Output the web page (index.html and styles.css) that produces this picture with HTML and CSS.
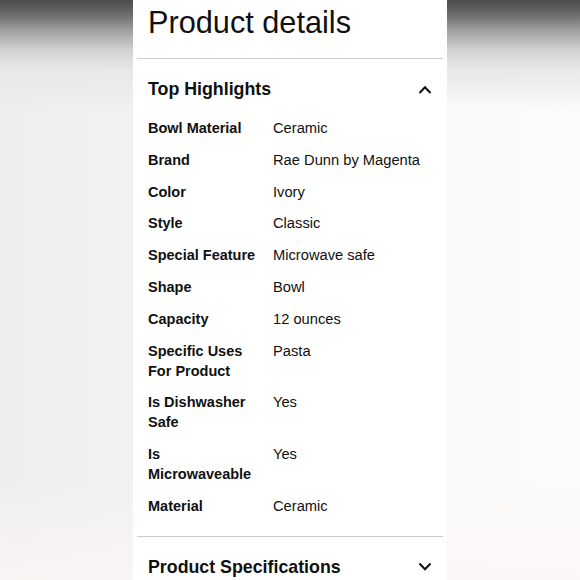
FILE: index.html
```html
<!DOCTYPE html>
<html lang="en">
<head>
<meta charset="utf-8">
<title>Product details</title>
<link rel="stylesheet" href="styles.css">
</head>
<body>
<div class="stage">
  <main class="panel">
    <h1 class="title">Product details</h1>
    <section class="section">
      <div class="section-head">
        <h2 class="section-title">Top Highlights</h2>
        <svg class="chevron" width="14" height="9" viewBox="0 0 14 9" aria-hidden="true"><polyline points="1.5,8 7,2.2 12.5,8" fill="none" stroke="#0f1111" stroke-width="2"/></svg>
      </div>
      <dl class="specs">
        <dt>Bowl Material</dt><dd>Ceramic</dd>
        <dt>Brand</dt><dd>Rae Dunn by Magenta</dd>
        <dt>Color</dt><dd>Ivory</dd>
        <dt>Style</dt><dd>Classic</dd>
        <dt>Special Feature</dt><dd>Microwave safe</dd>
        <dt>Shape</dt><dd>Bowl</dd>
        <dt>Capacity</dt><dd>12 ounces</dd>
        <dt>Specific Uses For Product</dt><dd>Pasta</dd>
        <dt>Is Dishwasher Safe</dt><dd>Yes</dd>
        <dt>Is Microwaveable</dt><dd>Yes</dd>
        <dt>Material</dt><dd>Ceramic</dd>
      </dl>
    </section>
    <section class="section">
      <div class="section-head">
        <h2 class="section-title">Product Specifications</h2>
        <svg class="chevron" width="14" height="9" viewBox="0 0 14 9" aria-hidden="true"><polyline points="1.5,1.5 7,7.2 12.5,1.5" fill="none" stroke="#0f1111" stroke-width="2"/></svg>
      </div>
    </section>
  </main>
</div>
</body>
</html>
```
FILE: styles.css
```css
html, body {
  margin: 0;
  padding: 0;
}
body {
  height: 580px;
  overflow: hidden;
  font-family: "Liberation Sans", Arial, sans-serif;
  color: #0f1111;
  background:
    linear-gradient(to bottom, #4b4b4b 0px, #6a6a6a 14px, #a4a4a4 32px, #d2d2d2 50px, #e8e8e8 70px, rgba(240,240,240,0) 110px),
    linear-gradient(to bottom, rgba(255,255,255,0) 0, rgba(255,255,255,0) 480px, rgba(252,246,244,0.8) 580px),
    linear-gradient(to right, #eeeeee 0, #f1f1f1 133px, #fafafa 447px, #fbfbfb 580px);
}
.stage {
  display: flex;
  justify-content: center;
  height: 580px;
}
.panel {
  width: 306px;
  padding: 0 4px;
  background: #ffffff;
  height: 580px;
}
.title {
  margin: 0;
  padding: 3px 0 15px 11px;
  font-size: 30.7px;
  line-height: 40px;
  font-weight: 400;
  border-bottom: 1px solid #cccccc;
}
.section {
  border-bottom: 1px solid #cccccc;
  padding: 18px 0 20px 11px;
}
.section-head {
  display: flex;
  align-items: center;
  justify-content: space-between;
  padding-right: 11px;
}
.section-title {
  margin: 0;
  font-size: 17.8px;
  line-height: 24px;
  font-weight: 700;
}
.chevron {
  display: block;
}
.specs {
  margin: 17px 0 0 0;
  display: grid;
  grid-template-columns: 116px 1fr;
  column-gap: 9px;
  row-gap: 11.8px;
  font-size: 14.7px;
  line-height: 20px;
}
.specs dt {
  font-weight: 700;
  font-size: 14.5px;
}
.specs dd {
  margin: 0;
}
```
